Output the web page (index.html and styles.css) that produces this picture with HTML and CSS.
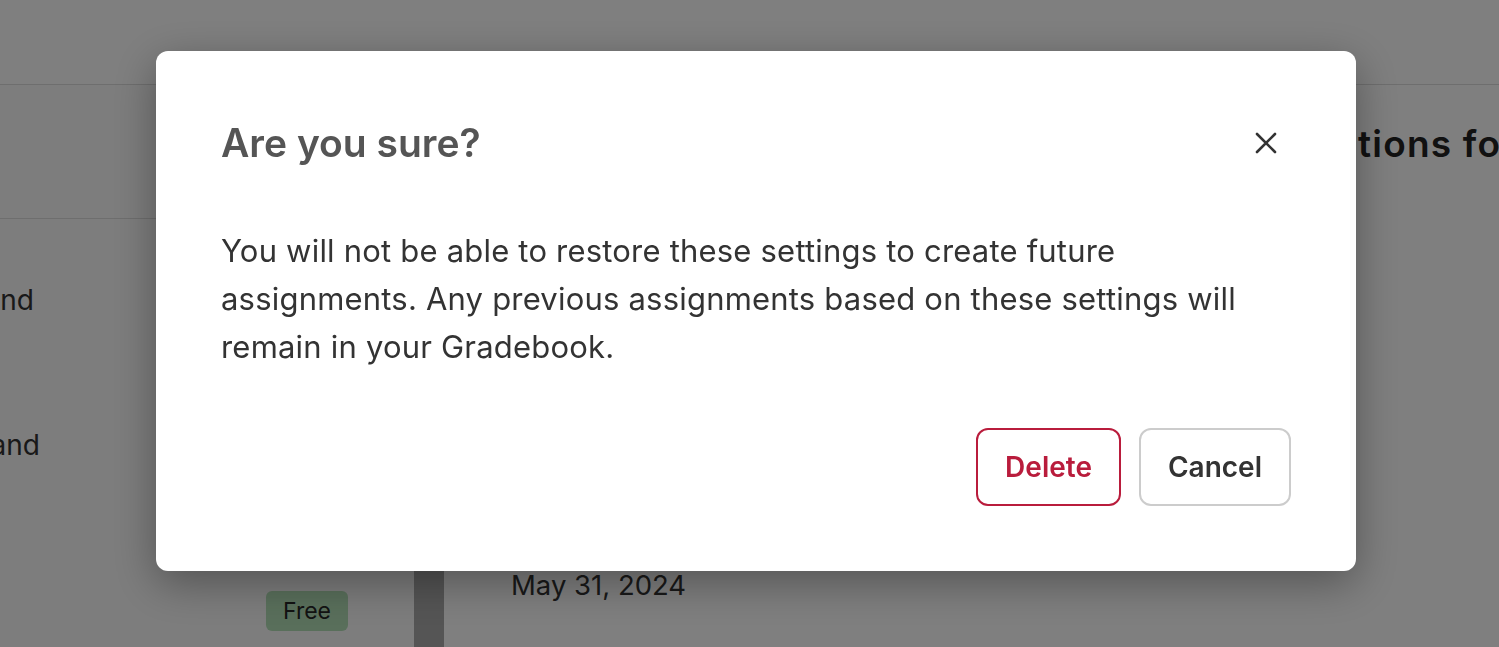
FILE: index.html
```html
<!DOCTYPE html>
<html lang="en">
<head>
<meta charset="utf-8">
<title>Are you sure?</title>
<link rel="stylesheet" href="styles.css">
</head>
<body>
<div class="page">
  <header class="topbar"></header>
  <div class="main">
    <aside class="sidebar">
      <div class="side-head"></div>
      <ul class="side-list">
        <li class="side-item">Reading and</li>
        <li class="side-item second">Writing and</li>
      </ul>
      <div class="side-foot"><span class="badge">Free</span></div>
    </aside>
    <div class="divider"></div>
    <section class="content">
      <h1 class="content-title">Recommendations for your class</h1>
      <p class="content-date">May 31, 2024</p>
    </section>
  </div>
</div>

<div class="overlay">
  <div class="modal" role="dialog" aria-labelledby="modal-title">
    <div class="modal-head">
      <h2 class="modal-title" id="modal-title">Are you sure?</h2>
      <button class="close-btn" aria-label="Close">
        <svg width="22" height="22" viewBox="0 0 22 22" fill="none" stroke="#333" stroke-width="2.6" stroke-linecap="round">
          <path d="M2 2 L20 20 M20 2 L2 20"/>
        </svg>
      </button>
    </div>
    <p class="modal-body">You will not be able to restore these settings to create future assignments. Any previous assignments based on these settings will remain in your Gradebook.</p>
    <div class="modal-actions">
      <button class="btn btn-danger">Delete</button>
      <button class="btn btn-plain">Cancel</button>
    </div>
  </div>
</div>
</body>
</html>
```

FILE: styles.css
```css
* { box-sizing: border-box; }

html, body {
  margin: 0;
  height: 100%;
  overflow: hidden;
}

body {
  font-family: Inter, "Noto Sans", "Liberation Sans", sans-serif;
  color: #333;
  background: #fff;
}

.page {
  height: 100%;
  display: flex;
  flex-direction: column;
}

.topbar {
  height: 85px;
  flex: none;
  border-bottom: 1px solid #dcdcdc;
  background: #fff;
}

.main {
  flex: 1;
  display: flex;
  min-height: 0;
}

.sidebar {
  width: 414px;
  flex: none;
  background: #fafafa;
  display: flex;
  flex-direction: column;
  overflow: hidden;
}

.side-head {
  height: 134px;
  border-bottom: 1px solid #dcdcdc;
  flex: none;
}

.side-list {
  list-style: none;
  margin: 0;
  padding: 0;
}

.side-item {
  width: 34px;
  overflow: hidden;
  direction: rtl;
  white-space: nowrap;
  font-size: 28px;
  line-height: 32px;
  color: #333;
  margin-top: 65px;
}

.side-item.second {
  width: 40px;
  margin-top: 113px;
}

.side-foot {
  display: flex;
  justify-content: flex-end;
  padding: 130px 66px 0 0;
}

.badge {
  background: #b3dfb7;
  color: #262626;
  font-size: 23px;
  line-height: 40px;
  padding: 0 17px;
  border-radius: 6px;
}

.divider {
  width: 30px;
  flex: none;
  background: #aaa;
}

.content {
  flex: 1;
  padding: 0 0 0 67px;
  overflow: hidden;
  min-width: 0;
}

.content-title {
  margin: 36px 0 0 590px;
  font-size: 37px;
  line-height: 45px;
  font-weight: 600;
  letter-spacing: 1.2px;
  color: #222;
  white-space: nowrap;
}

.content-date {
  margin: 403px 0 0;
  font-size: 27.5px;
  line-height: 32px;
  color: #333;
}

.overlay {
  position: fixed;
  inset: 0;
  background: rgba(0, 0, 0, 0.5);
  padding: 51px 0 0 156px;
}

.modal {
  width: 1200px;
  height: 520px;
  background: #fff;
  border-radius: 12px;
  padding: 67px 65px 65px;
  box-shadow: 0 12px 44px rgba(0, 0, 0, 0.34);
  display: flex;
  flex-direction: column;
}

.modal-head {
  display: flex;
  justify-content: space-between;
  align-items: center;
}

.modal-title {
  margin: 0;
  font-size: 39px;
  line-height: 48px;
  font-weight: 600;
  color: #555;
}

.close-btn {
  width: 50px;
  height: 50px;
  border: 0;
  background: none;
  padding: 0;
  display: flex;
  align-items: center;
  justify-content: center;
  cursor: pointer;
}

.modal-body {
  margin: 59px 0 0;
  max-width: 1040px;
  font-size: 31px;
  line-height: 48px;
  letter-spacing: 0.2px;
  color: #333;
}

.modal-actions {
  margin-top: auto;
  display: flex;
  justify-content: flex-end;
  gap: 18px;
}

.btn {
  font-family: inherit;
  font-size: 28px;
  line-height: 34px;
  font-weight: 600;
  padding: 20px 27px;
  border-radius: 12px;
  background: #fff;
  cursor: pointer;
}

.btn-danger {
  border: 2px solid #b91c3c;
  color: #b91c3c;
}

.btn-plain {
  border: 2px solid #ccc;
  color: #333;
}
```
